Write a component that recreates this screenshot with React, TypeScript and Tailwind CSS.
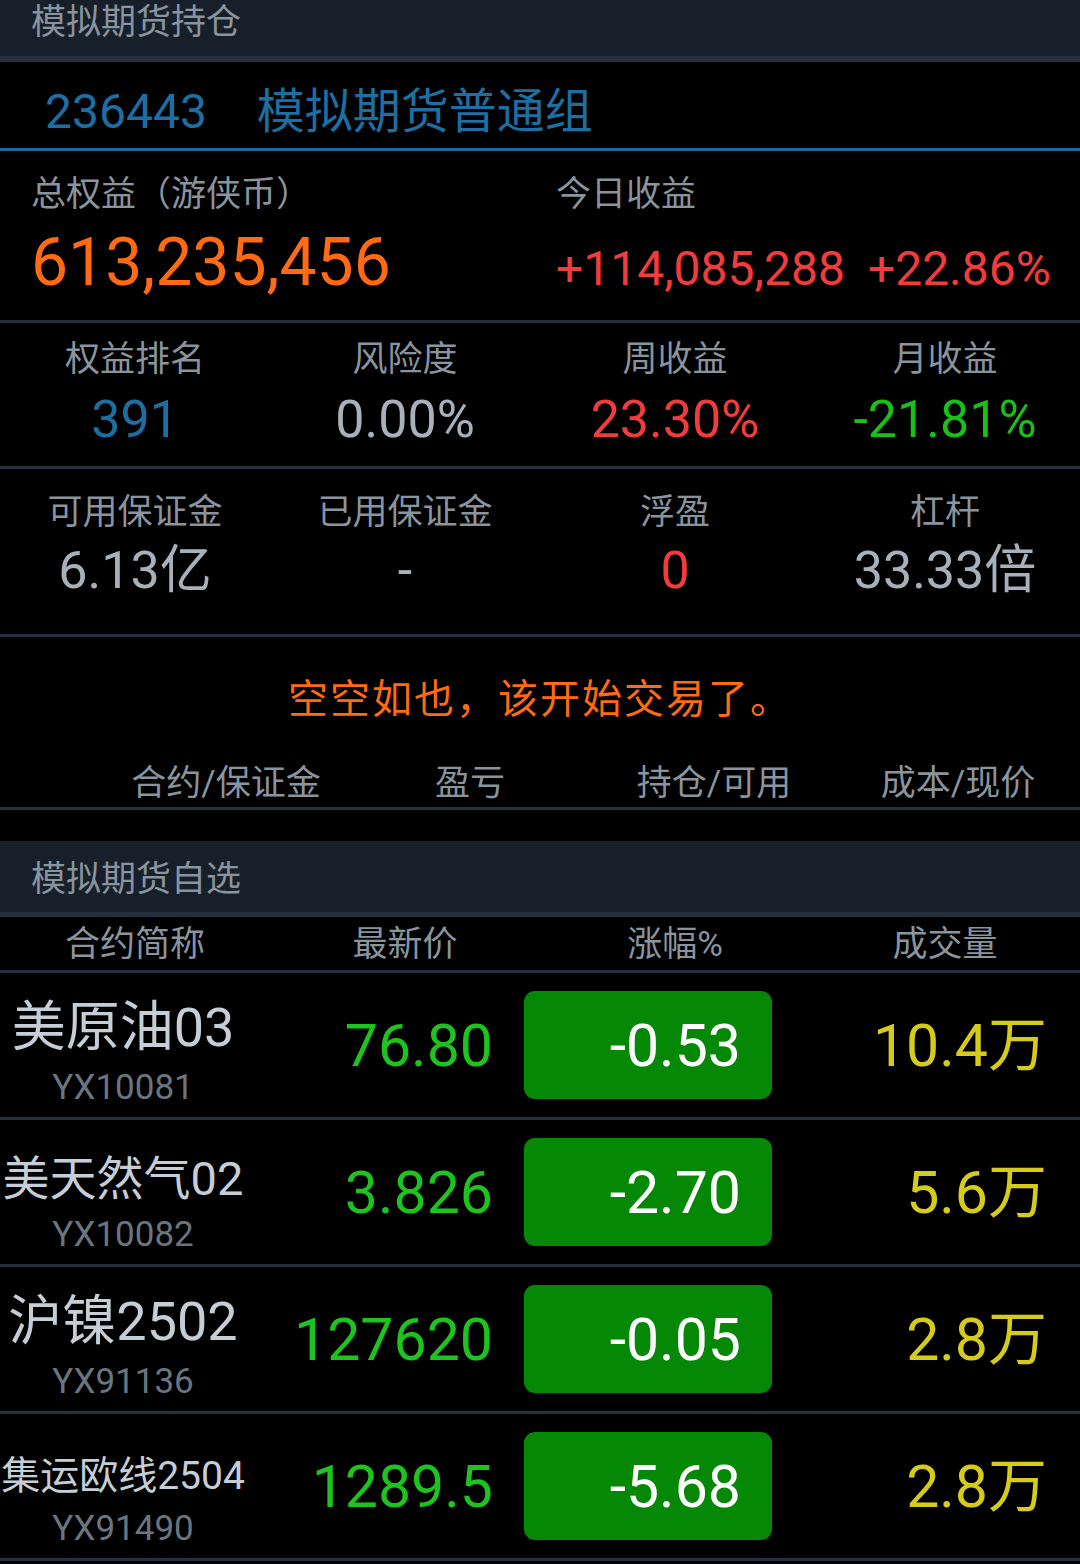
import React from "react";

const rows = [
  { name: "美原油03", size: "text-[54px]", code: "YX10081", price: "76.80", chg: "-0.53", vol: "10.4万" },
  { name: "美天然气02", size: "text-[47px]", code: "YX10082", price: "3.826", chg: "-2.70", vol: "5.6万" },
  { name: "沪镍2502", size: "text-[54px]", code: "YX91136", price: "127620", chg: "-0.05", vol: "2.8万" },
  { name: "集运欧线2504", size: "text-[39px]", code: "YX91490", price: "1289.5", chg: "-5.68", vol: "2.8万" },
];

export default function App() {
  return (
    <div className="w-[1080px] h-[1564px] overflow-hidden bg-black font-['Roboto','Noto_Sans_CJK_SC',sans-serif] text-[#8a949e]">
      {/* top header */}
      <div className="h-[62px] bg-[#17202a] border-b-[6px] border-[#26313d] pl-[31px] pt-[1px]">
        <div className="text-[35px] leading-[44px]">模拟期货持仓</div>
      </div>

      {/* account row */}
      <div className="h-[89px] border-b-[3px] border-[#1b6a9c] pl-[45px] pt-[22px]">
        <div className="flex text-[48px] leading-[56px] text-[#1d6ea3]">
          <span>236443</span>
          <span className="ml-[50px]">模拟期货普通组</span>
        </div>
      </div>

      {/* equity block */}
      <div className="h-[172px] border-b-[3px] border-[#27313c] pt-[23px]">
        <div className="flex text-[35px] leading-[42px]">
          <div className="w-[556px] pl-[31px]">总权益（游侠币）</div>
          <div>今日收益</div>
        </div>
        <div className="flex items-baseline mt-[7px] leading-[80px]">
          <div className="w-[556px] pl-[31px] text-[66px] text-[#ff6a12]">613,235,456</div>
          <div className="text-[48px] text-[#f23c3c]">
            <span>+114,085,288</span>
            <span className="ml-[23px]">+22.86%</span>
          </div>
        </div>
      </div>

      {/* grid 1 */}
      <div className="h-[146px] border-b-[3px] border-[#27313c] pt-[16px] grid grid-cols-4 text-center">
        {[
          ["权益排名", "391", "text-[#1d6ea3]"],
          ["风险度", "0.00%", "text-[#a7b1bb]"],
          ["周收益", "23.30%", "text-[#f23c3c]"],
          ["月收益", "-21.81%", "text-[#17c117]"],
        ].map(([l, v, c]) => (
          <div key={l} className="flex flex-col items-center">
            <div className="text-[35px] leading-[42px]">{l}</div>
            <div className={`text-[52px] leading-[60px] mt-[9px] ${c}`}>{v}</div>
          </div>
        ))}
      </div>

      {/* grid 2 */}
      <div className="h-[168px] border-b-[3px] border-[#27313c] pt-[23px] grid grid-cols-4 text-center">
        {[
          ["可用保证金", "6.13亿", "text-[#a7b1bb]"],
          ["已用保证金", "-", "text-[#a7b1bb]"],
          ["浮盈", "0", "text-[#f23c3c]"],
          ["杠杆", "33.33倍", "text-[#a7b1bb]"],
        ].map(([l, v, c]) => (
          <div key={l} className="flex flex-col items-center">
            <div className="text-[35px] leading-[42px]">{l}</div>
            <div className={`text-[52px] leading-[60px] mt-[7px] ${c}`}>{v}</div>
          </div>
        ))}
      </div>

      {/* empty positions */}
      <div className="h-[173px] border-b-[3px] border-[#27313c] pt-[39px]">
        <div className="text-center text-[40px] leading-[48px] tracking-[2px] text-[#ff6a12]">空空如也，该开始交易了。</div>
        <div className="mt-[38px] pl-[104px] grid grid-cols-4 text-center text-[35px] leading-[44px]">
          <div>合约/保证金</div>
          <div>盈亏</div>
          <div>持仓/可用</div>
          <div>成本/现价</div>
        </div>
      </div>

      <div className="h-[31px]" />

      {/* watchlist header */}
      <div className="h-[76px] bg-[#17202a] border-b-[5px] border-[#26313d] pl-[31px] pt-[17px]">
        <div className="text-[35px] leading-[44px]">模拟期货自选</div>
      </div>

      {/* table header */}
      <div className="h-[56px] border-b-[3px] border-[#27313c] pt-[4px] grid grid-cols-4 text-center text-[35px] leading-[48px]">
        <div>合约简称</div>
        <div>最新价</div>
        <div>涨幅%</div>
        <div>成交量</div>
      </div>

      {rows.map((r) => (
        <div key={r.code} className="h-[147px] border-b-[3px] border-[#27313c] flex items-center">
          <div className="w-[246px] self-start flex flex-col items-center">
            <div className="mt-[20px] h-[62px] flex items-end justify-center">
              <span className={`${r.size} leading-none text-[#c5ced6] whitespace-nowrap`}>{r.name}</span>
            </div>
            <div className="mt-[13px] text-[35px] leading-[40px] text-[#6a7580]">{r.code}</div>
          </div>
          <div className="w-[247px] text-right text-[59px] leading-none text-[#1ec41e]">{r.price}</div>
          <div className="ml-[31px] w-[248px] h-[108px] rounded-[11px] bg-[#058805] flex items-center justify-end pr-[31px] text-[59px] leading-none text-white">
            {r.chg}
          </div>
          <div className="flex-1 text-right pr-[33px] text-[59px] leading-none text-[#d5cb1b]">{r.vol}</div>
        </div>
      ))}
    </div>
  );
}
